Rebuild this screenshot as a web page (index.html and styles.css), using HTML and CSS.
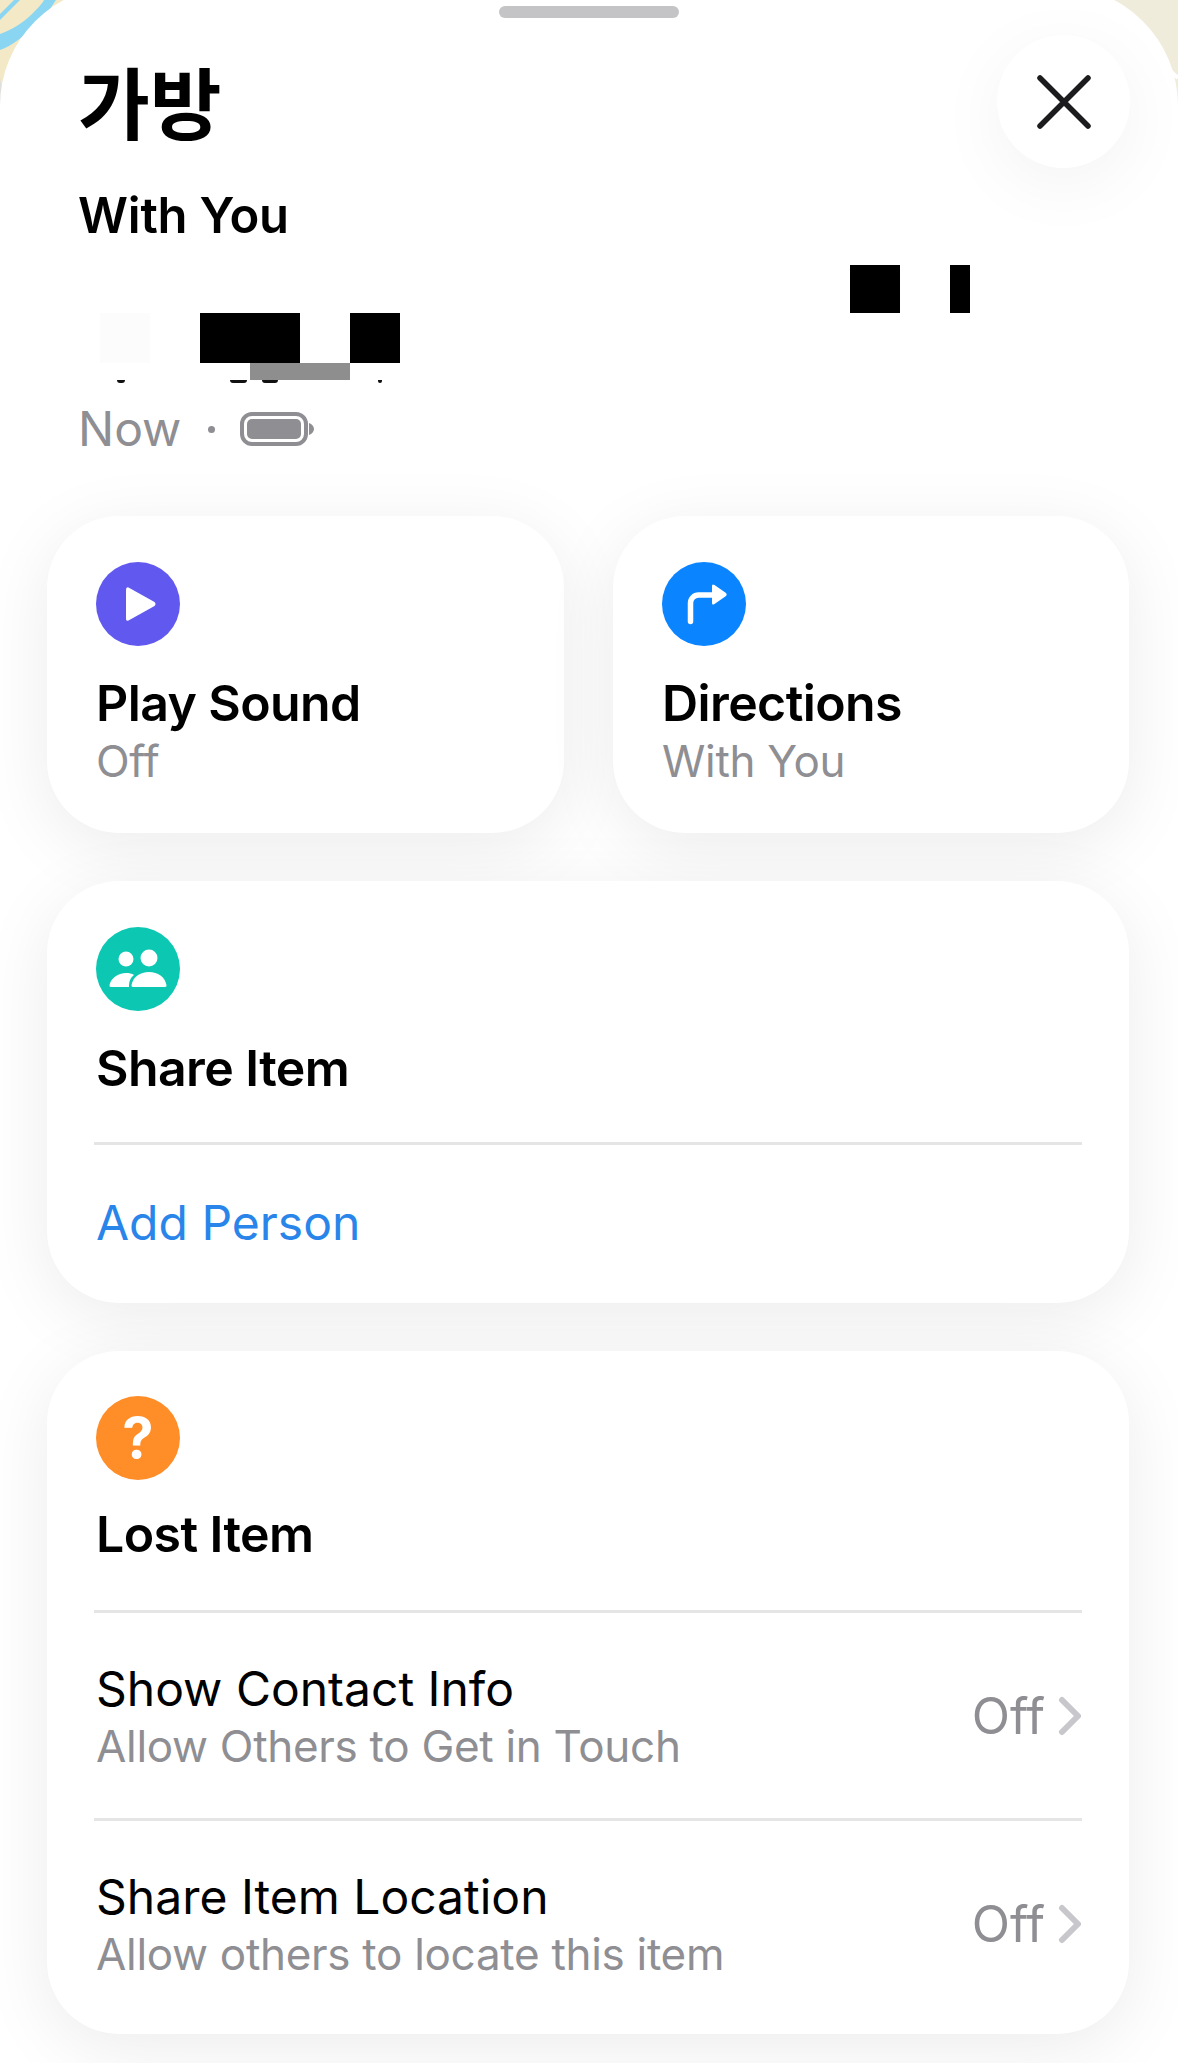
FILE: index.html
```html
<!DOCTYPE html>
<html lang="en">
<head>
  <meta charset="UTF-8">
  <title>가방</title>
  <link rel="stylesheet" href="styles.css">
</head>
<body>

  <!-- map peeking out behind the sheet corners -->
  <svg class="map" viewBox="0 0 1178 130" preserveAspectRatio="none">
    <rect width="1178" height="130" fill="#efecdc"/>
    <rect width="130" height="130" fill="#f3e9c6"/>
    <path d="M0 14 L14 0 L20 0 L0 20Z" fill="#8ad6f2"/>
    <path d="M0 34 C12 30 24 22 32 14 C38 8 42 4 44 0 L56 0 C50 10 42 18 34 26 C24 36 12 46 0 50Z" fill="#8ad6f2"/>
    <path d="M0 78 L0 112 L5 100Z" fill="#dfdfdc"/>
    <path d="M1160 62 L1178 78" stroke="#fff" stroke-width="4" fill="none"/>
  </svg>

  <div class="sheet">
    <div class="handle"></div>

    <div class="head">
      <div>
        <h1 class="title">가방</h1>
        <div class="where">With You</div>
      </div>
      <button class="close">
        <svg width="54" height="54" viewBox="0 0 54 54"><path d="M3 3 L51 51 M51 3 L3 51" stroke="#1c1c1e" stroke-width="5.500" stroke-linecap="round"/></svg>
      </button>
    </div>

    <!-- owner line, blacked out by hand -->
    <div class="owner">
      <span class="patch patch-pale"></span>
      <span class="patch patch-a"></span>
      <span class="patch patch-b"></span>
      <span class="patch patch-c"></span>
      <span class="patch patch-d"></span>
      <span class="patch patch-grey"></span>
      <span class="ink ink-a"></span>
      <span class="ink ink-b"></span>
      <span class="ink ink-c"></span>
      <span class="ink ink-d"></span>
    </div>

    <div class="status">
      <span>Now</span>
      <span class="dot"></span>
      <svg width="74" height="34" viewBox="0 0 74 34">
        <rect x="2" y="2" width="64" height="30" rx="10" fill="none" stroke="#8e8e93" stroke-width="4"/>
        <rect x="7" y="7" width="54" height="20" rx="5" fill="#8e8e93"/>
        <path d="M69 11 C72 12 74 14.500 74 17 C74 19.500 72 22 69 23Z" fill="#8e8e93"/>
      </svg>
    </div>

    <div class="cards">
      <div class="pair">
        <div class="card">
          <svg class="icon" viewBox="0 0 84 84">
            <circle cx="42" cy="42" r="42" fill="#6159ef"/>
            <path d="M32.500 25.500 L58.500 40 Q60.500 42 58.500 44 L32.500 58.500 Q30 59.500 30 57 V28 Q30 24.500 32.500 25.500Z" fill="#fff"/>
          </svg>
          <div class="card-title">Play Sound</div>
          <div class="card-sub">Off</div>
        </div>
        <div class="card">
          <svg class="icon" viewBox="0 0 84 84">
            <circle cx="42" cy="42" r="42" fill="#0a84ff"/>
            <path d="M28.500 59.500 V41 a8 8 0 0 1 8-8 H52" fill="none" stroke="#fff" stroke-width="5.500" stroke-linecap="round"/>
            <path d="M50 24 Q50 21.500 52.500 23 L64 31 Q65.500 32.500 64 34 L52.500 42 Q50 43.500 50 41Z" fill="#fff"/>
          </svg>
          <div class="card-title">Directions</div>
          <div class="card-sub">With You</div>
        </div>
      </div>

      <div class="card card-share">
        <svg class="icon" viewBox="0 0 84 84">
          <circle cx="42" cy="42" r="42" fill="#0cc7b2"/>
          <circle cx="30" cy="32" r="7.500" fill="#fff"/>
          <circle cx="53" cy="31" r="8.500" fill="#fff"/>
          <path d="M15 60 Q13 60 13.500 58 C15 51 22 46 30 46 C33 46 36 46.500 38 48 C34 51 33 55 33 60Z" fill="#fff"/>
          <path d="M37 60 Q35 60 35.500 58 C37 50 44 45 53 45 C62 45 69 50 70.500 58 Q71 60 69 60Z" fill="#fff"/>
        </svg>
        <div class="card-title">Share Item</div>
        <div class="rule"></div>
        <div class="link">Add Person</div>
      </div>

      <div class="card card-lost">
        <div class="icon icon-help">?</div>
        <div class="card-title">Lost Item</div>
        <div class="rule"></div>
        <div class="row">
          <div>
            <div class="row-title">Show Contact Info</div>
            <div class="row-sub">Allow Others to Get in Touch</div>
          </div>
          <div class="row-value">Off
            <svg width="24" height="40" viewBox="0 0 24 40"><path d="M4 4 L20 20 L4 36" fill="none" stroke="#c7c7cc" stroke-width="6" stroke-linecap="round" stroke-linejoin="round"/></svg>
          </div>
        </div>
        <div class="rule"></div>
        <div class="row">
          <div>
            <div class="row-title">Share Item Location</div>
            <div class="row-sub">Allow others to locate this item</div>
          </div>
          <div class="row-value">Off
            <svg width="24" height="40" viewBox="0 0 24 40"><path d="M4 4 L20 20 L4 36" fill="none" stroke="#c7c7cc" stroke-width="6" stroke-linecap="round" stroke-linejoin="round"/></svg>
          </div>
        </div>
      </div>
    </div>
  </div>

</body>
</html>
```

FILE: styles.css
```css
body {
  font-family: Inter, "Noto Sans CJK KR", sans-serif;
  margin: 0;
  height: 2063px;
  overflow: hidden;
  background: #fff;
  color: #000;
}

.map {
  position: absolute;
  top: 0;
  left: 0;
  width: 1178px;
  height: 130px;
}

.sheet {
  position: relative;
  margin-top: -14px;
  height: 2077px;
  padding-top: 20px;
  box-sizing: border-box;
  background: #fff;
  border-radius: 120px 120px 0 0;
}

.handle {
  width: 180px;
  height: 12px;
  margin: 0 auto;
  background: #c4c4c6;
  border-radius: 6px;
}

.head {
  display: flex;
  justify-content: space-between;
  align-items: flex-start;
  padding: 17px 48px 0 78px;
}

.title {
  font-family: "Noto Sans CJK KR", sans-serif;
  font-size: 78px;
  font-weight: 700;
  line-height: 100px;
  margin: 15px 0 0;
}

.where {
  font-size: 49px;
  font-weight: 600;
  letter-spacing: -0.2px;
  line-height: 58px;
  margin-top: 37px;
}

.close {
  width: 133px;
  height: 133px;
  padding: 0;
  border: none;
  border-radius: 50%;
  background: #fff;
  box-shadow: 0 16px 70px rgba(0,0,0,0.05);
  display: flex;
  align-items: center;
  justify-content: center;
}

/* name row: patches sit at fixed spots over a line that is not shown */
.owner {
  position: relative;
  height: 155px;
}

.patch {
  position: absolute;
  background: #000;
  top: 68px;
  height: 50px;
}

.patch-pale { left: 100px; width: 50px; background: #fcfcfc; }
.patch-a { left: 200px; width: 100px; }
.patch-b { left: 350px; width: 50px; }
.patch-c { left: 850px; width: 50px; top: 20px; height: 48px; }
.patch-d { left: 950px; width: 20px; top: 20px; height: 48px; }
.patch-grey { left: 250px; width: 100px; top: 118px; height: 17px; background: #8e8e8e; }

.ink {
  position: absolute;
  top: 135px;
  height: 3px;
  background: #111;
  border-radius: 0 0 8px 8px;
}

.ink-a { left: 117px; width: 8px; }
.ink-b { left: 230px; width: 17px; }
.ink-c { left: 262px; width: 16px; }
.ink-d { left: 378px; width: 4px; }

.status {
  display: flex;
  align-items: center;
  height: 58px;
  padding-left: 78px;
  font-size: 48px;
  line-height: 58px;
  color: #8e8e93;
}

.dot {
  width: 7px;
  height: 7px;
  margin: 0 25px 0 27px;
  border-radius: 50%;
  background: #8e8e93;
}

.cards {
  display: flex;
  flex-direction: column;
  gap: 48px;
  padding: 58px 49px 0 47px;
}

.pair {
  display: grid;
  grid-template-columns: 517px 516px;
  column-gap: 49px;
}

.card {
  padding: 46px 47px 0 49px;
  height: 317px;
  box-sizing: border-box;
  background: #fff;
  border-radius: 72px;
  box-shadow: 0 14px 70px rgba(0,0,0,0.08);
}

.card-share { height: 422px; }
.card-lost { height: 683px; padding-top: 45px; }

.icon {
  display: block;
  width: 84px;
  height: 84px;
}

.icon-help {
  display: flex;
  align-items: center;
  justify-content: center;
  border-radius: 50%;
  background: #ff8d28;
  color: #fff;
  font-size: 56px;
  font-weight: 700;
  line-height: 84px;
}

.card-title {
  font-size: 50px;
  font-weight: 600;
  letter-spacing: -0.6px;
  line-height: 58px;
  margin-top: 28px;
}

.card-sub {
  font-size: 44px;
  letter-spacing: -0.3px;
  line-height: 54px;
  margin-top: 2px;
  color: #8e8e93;
}

.card-lost .card-title { margin-top: 25px; }

.rule {
  height: 3px;
  margin: 0 0 0 -2px;
  background: #e5e5e5;
}

.card-title + .rule { margin-top: 45px; }
.card-lost .card-title + .rule { margin-top: 47px; }

.link {
  font-size: 48px;
  line-height: 58px;
  margin-top: 49px;
  color: #2a85ea;
}

.row {
  display: flex;
  justify-content: space-between;
  align-items: center;
  height: 205px;
}

.row-title {
  font-size: 48px;
  line-height: 58px;
  margin-bottom: 2px;
}

.row-sub {
  font-size: 44px;
  letter-spacing: -0.3px;
  line-height: 52px;
  color: #8e8e93;
}

.row-value {
  display: flex;
  align-items: center;
  gap: 13px;
  font-size: 50px;
  color: #8e8e93;
}
```
